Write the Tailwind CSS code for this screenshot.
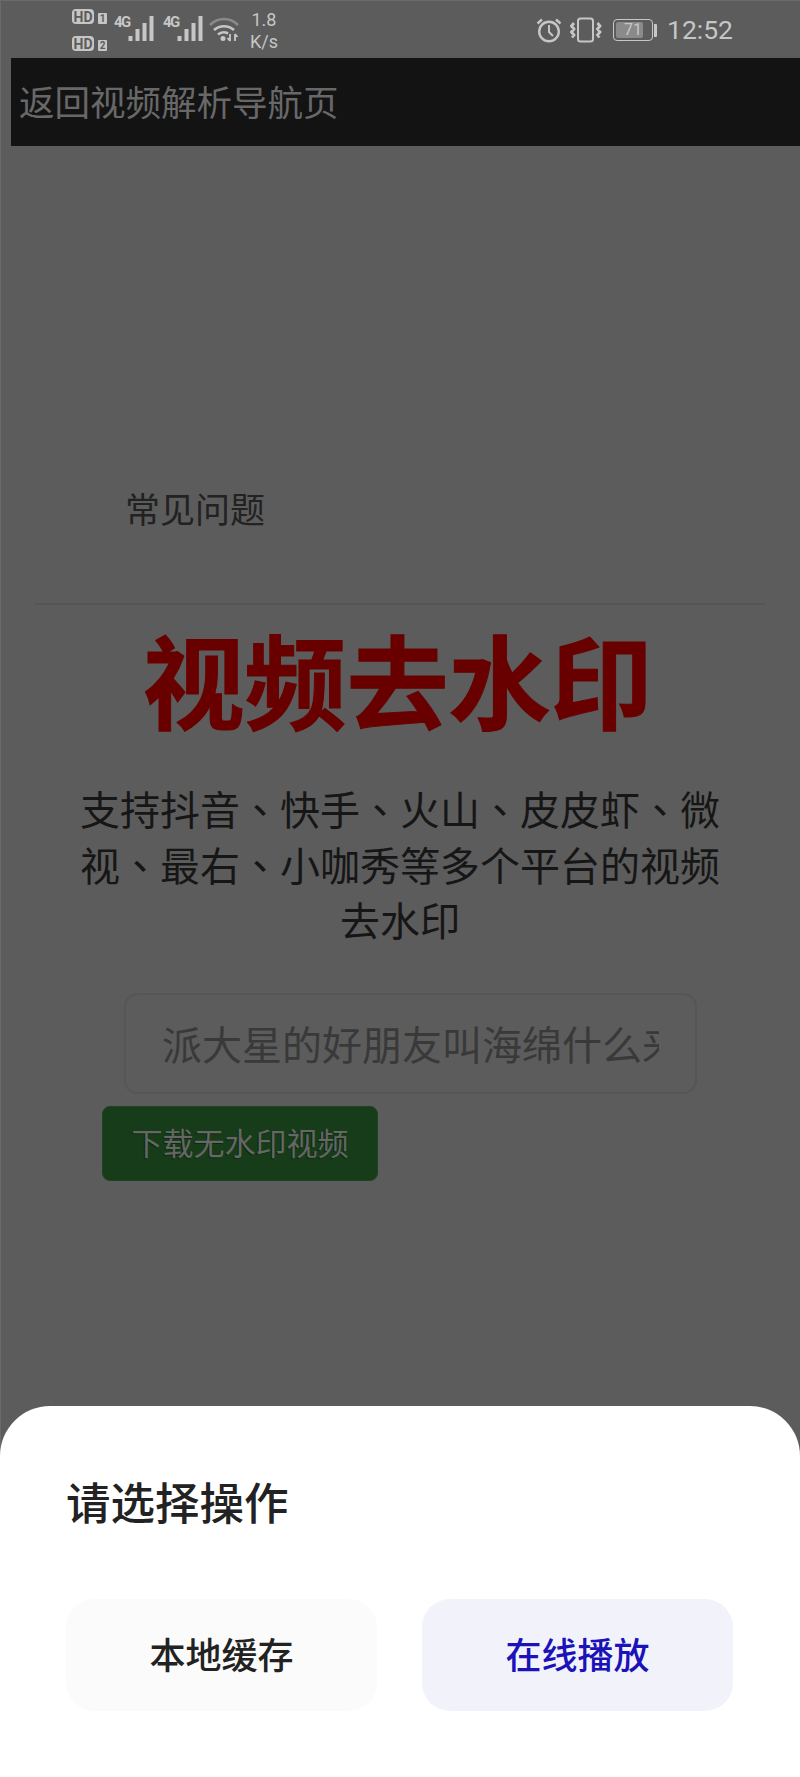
<!doctype html>
<html>

<head>
	<meta charset="UTF-8">
	<meta name="viewport" content="width=device-width, initial-scale=1.0">
	<script src="https://cdn.jsdelivr.net/npm/@tailwindcss/browser@4"></script>
</head>

<body class="bg-[#5c5c5c] font-['Noto_Sans_CJK_SC','Noto_Sans',sans-serif]">

	<div class="relative h-[1777px] w-[800px] overflow-hidden">

		<!-- lighter edge of the dimmed page -->
		<div class="absolute inset-y-0 left-0 w-px bg-[#6a6a6a]"></div>
		<div class="absolute inset-x-0 top-0 h-px bg-[#6a6a6a]"></div>

		<!-- status bar -->
		<div class="flex h-[58px] items-start justify-between pl-[72px] pr-[67px] text-[#c6c6c6]">
			<div class="flex items-start">
				<div class="mt-[9px] flex w-[42px] flex-col gap-[12px]">
					<div class="flex items-end gap-[4px]">
						<span class="flex h-[15px] w-[22px] items-center justify-center rounded-[4px] bg-[#c6c6c6] font-['Roboto'] text-[14px] font-bold leading-none text-[#5c5c5c]">HD</span>
						<span class="flex h-[11px] w-[9px] items-center justify-center rounded-[1px] bg-[#c6c6c6] font-['Roboto'] text-[10px] font-bold leading-none text-[#5c5c5c]">1</span>
					</div>
					<div class="flex items-end gap-[4px]">
						<span class="flex h-[15px] w-[22px] items-center justify-center rounded-[4px] bg-[#c6c6c6] font-['Roboto'] text-[14px] font-bold leading-none text-[#5c5c5c]">HD</span>
						<span class="flex h-[11px] w-[9px] items-center justify-center rounded-[1px] bg-[#c6c6c6] font-['Roboto'] text-[10px] font-bold leading-none text-[#5c5c5c]">2</span>
					</div>
				</div>
				<div class="mt-[16px] flex">
					<span class="w-[14px] font-['Roboto'] text-[15px] font-bold leading-[13px] tracking-[-1.5px]">4G</span>
					<svg width="26" height="25" viewBox="0 0 26 25" fill="#c6c6c6"><rect x="0.500" y="20" width="4" height="5"/><rect x="7.500" y="13" width="4" height="12"/><rect x="14.500" y="7" width="4" height="18"/><rect x="21.500" y="0" width="4" height="25"/></svg>
				</div>
				<div class="ml-[9px] mt-[16px] flex">
					<span class="w-[14px] font-['Roboto'] text-[15px] font-bold leading-[13px] tracking-[-1.5px]">4G</span>
					<svg width="26" height="25" viewBox="0 0 26 25" fill="#c6c6c6"><rect x="0.500" y="20" width="4" height="5"/><rect x="7.500" y="13" width="4" height="12"/><rect x="14.500" y="7" width="4" height="18"/><rect x="21.500" y="0" width="4" height="25"/></svg>
				</div>
				<svg class="ml-[6px] mt-[16px]" width="30" height="26" viewBox="0 0 30 26" fill="none" stroke="#c6c6c6" stroke-width="2.600">
					<path d="M1 9c8-8 20-8 28 0" stroke="#8a8a8a"/>
					<path d="M5 14c6-5 14-5 20 0"/>
					<path d="M9 18.500c3-2.500 7-2.700 10-1"/>
					<circle cx="14" cy="22.500" r="2.500" fill="#c6c6c6" stroke="none"/>
					<path d="M21 18v7M21 25l-2.500-3M26 18v7M26 18l2.500 3" stroke-width="1.800"/>
				</svg>
				<div class="ml-[11px] mt-[11px] w-[28px] text-center font-['Roboto'] text-[18px] leading-none">
					<div>1.8</div>
					<div class="mt-[4px] whitespace-nowrap">K/s</div>
				</div>
			</div>
			<div class="mt-[17px] flex items-center">
				<svg width="26" height="26" viewBox="0 0 26 26" fill="none" stroke="#c6c6c6" stroke-width="2.400">
					<circle cx="13" cy="14.500" r="9.800"/>
					<path d="M13 8v7l4 4" stroke-width="2"/>
					<path d="M1.500 6.500L6 2.500M24.500 6.500L20 2.500"/>
				</svg>
				<svg class="ml-[8px]" width="32" height="26" viewBox="0 0 32 26" fill="none" stroke="#c6c6c6" stroke-width="2.800">
					<rect x="8" y="1.500" width="15" height="23" rx="2.500" stroke-width="2"/>
					<path d="M4 6L1.500 9L4 12L1.500 15L4 18L2 20.500M27.500 6L30 9L27.500 12L30 15L27.500 18L29.500 20.500"/>
				</svg>
				<div class="relative ml-[11px] flex h-[22px] w-[40px] items-center justify-center rounded-[4px] border border-[#c6c6c6] font-['Roboto'] text-[16px] leading-none">
					<div class="absolute inset-y-[2px] left-[2px] w-[27px] rounded-[2px] bg-[#8a8a8a]"></div>
					<span class="relative">71</span>
				</div>
				<div class="ml-[1px] h-[13px] w-[3px] rounded-r-[1px] bg-[#c6c6c6]"></div>
				<span class="ml-[10px] font-['Roboto'] text-[26.500px] leading-none">12:52</span>
			</div>
		</div>

		<!-- back link bar -->
		<div class="ml-[11px] flex h-[88px] items-center bg-[#131313] pb-[2px] pl-[8px] text-[35.500px] leading-none text-[#686868]">返回视频解析导航页</div>

		<!-- page -->
		<p class="ml-[125px] mt-[342px] text-[35px] leading-[40px] text-[#222222]">常见问题</p>
		<hr class="ml-[35px] mt-[75px] w-[730px] border-t-2 border-[#555555]">
		<h1 class="mt-[14px] pr-[5px] text-center text-[102px] font-bold leading-[118px] text-[#690000] [-webkit-text-stroke:1px_#690000]">视频去水印</h1>
		<p class="mx-auto mt-[44px] w-[640px] text-center font-['Noto_Sans_CJK_TC','Noto_Sans',sans-serif] text-[40px] leading-[55.500px] text-[#161616]">支持抖音、快手、火山、皮皮虾、微视、最右、小咖秀等多个平台的视频去水印</p>
		<input class="ml-[124px] mt-[45px] block h-[101px] w-[573px] rounded-[14px] border-2 border-[#565656] bg-transparent px-[36px] text-[40px] text-[#393939] placeholder:text-[#393939]" placeholder="派大星的好朋友叫海绵什么来着">
		<button class="ml-[102px] mt-[12px] block h-[75px] w-[276px] rounded-[8px] border border-[#1c4420] bg-[#163c19] pb-[3px] text-[31px] leading-none text-[#666666] [text-shadow:-1px_1px_0_#0d2a0f]">下载无水印视频</button>

		<!-- bottom sheet -->
		<div class="absolute inset-x-0 bottom-0 h-[371px] rounded-t-[50px] bg-white px-[66px]">
			<h2 class="mt-[69px] text-[44.500px] font-medium leading-[52px] text-[#222222]">请选择操作</h2>
			<div class="mt-[72px] flex gap-[45px]">
				<button class="h-[112px] w-[311px] rounded-[28px] bg-[#fbfbfb] pb-[4px] text-[36px] font-medium text-[#222222]">本地缓存</button>
				<button class="h-[112px] w-[311px] rounded-[28px] bg-[#f2f2fb] pb-[4px] text-[36px] font-medium text-[#1b12b8]">在线播放</button>
			</div>
		</div>
	</div>

</body>

</html>
